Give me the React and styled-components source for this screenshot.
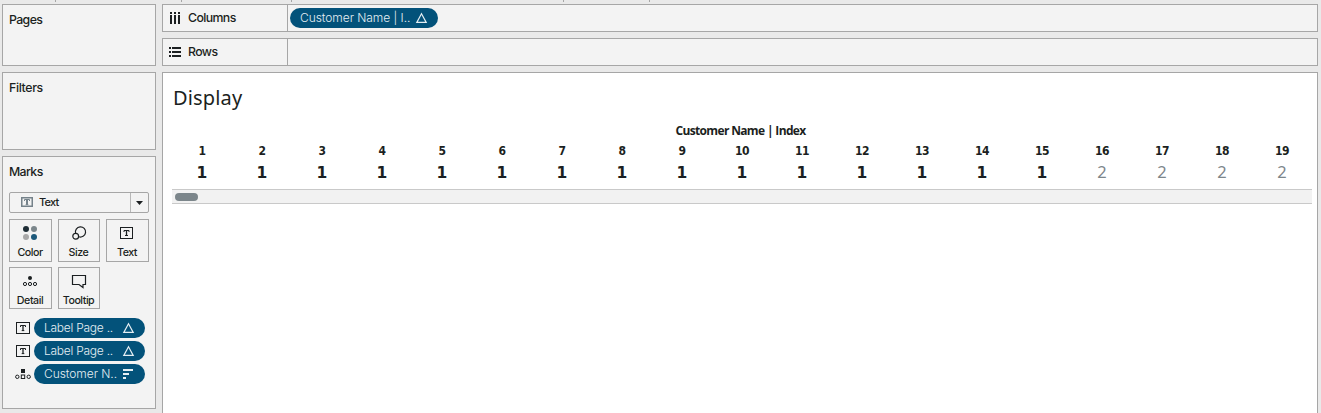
import React from 'react';
import styled, { createGlobalStyle } from 'styled-components';

const Global = createGlobalStyle`
  *, *::before, *::after { box-sizing: border-box; }
  body { margin: 0; background: #e9e9e9; color: #1b1f21; overflow: hidden; font-family: Inter, "Liberation Sans", sans-serif; }
  svg { display: block; flex: none; }
`;

const ui = 'Inter, "Liberation Sans", sans-serif';
const viz = '"Open Sans", "Noto Sans", sans-serif';

const Workspace = styled.div`
  height: 413px;
  overflow: hidden;
  display: flex;
  flex-direction: column;
`;
const TopStrip = styled.div`
  height: 4px;
  flex: none;
  display: flex;
`;
const TopCell = styled.div`
  width: ${(p) => p.$w}px;
  height: 2px;
  border-right: 1px solid #a6a6a6;
`;
const Body = styled.div`
  display: flex;
  gap: 6px;
  padding: 0 3px 0 2px;
  align-items: flex-start;
`;
const Side = styled.aside`
  width: 154px;
  flex: none;
  display: flex;
  flex-direction: column;
  gap: 6px;
`;
const Card = styled.section`
  height: ${(p) => p.$h}px;
  border: 1px solid #a6a6a6;
  background: #f3f3f3;
  padding: 7px 6px 0;
`;
const Label = styled.div`
  font: 500 12.3px/16px ${ui};
  letter-spacing: ${(p) => p.$ls || -0.6}px;
  white-space: nowrap;
`;
const MarkSelect = styled.div`
  height: 21px;
  margin-top: 12px;
  border: 1px solid #a6a6a6;
  border-radius: 2px;
  display: flex;
  align-items: stretch;
`;
const SelectValue = styled.div`
  width: 120px;
  flex: none;
  padding-left: 11px;
  padding-bottom: 1px;
  display: flex;
  align-items: center;
  gap: 6px;
  font: 500 11px/16px ${ui};
  letter-spacing: -0.8px;
`;
const SelectArrow = styled.div`
  flex: 1;
  border-left: 1px solid #b8b8b8;
  display: flex;
  align-items: center;
  justify-content: center;
`;
const MarkGrid = styled.div`
  margin-top: 6px;
  display: grid;
  grid-template-columns: 43px 42px 43px;
  grid-template-rows: 43px 42px;
  column-gap: 6px;
  row-gap: 5px;
`;
const MarkButton = styled.div`
  border: 1px solid #a6a6a6;
  display: flex;
  flex-direction: column;
  align-items: center;
  padding: 4px 1px 0 0;
  font: 500 10.7px/16px ${ui};
  letter-spacing: -0.48px;
  white-space: nowrap;
  svg { margin-bottom: 3px; }
`;
const PillList = styled.div`
  margin-top: 9px;
  display: flex;
  flex-direction: column;
  gap: 3px;
`;
const PillRow = styled.div`
  display: flex;
  align-items: center;
  padding-left: 5px;
`;
const RowIcon = styled.div`
  width: 18px;
  margin-right: 2px;
  display: flex;
  justify-content: center;
`;
const Pill = styled.div`
  width: ${(p) => p.$w}px;
  height: 20px;
  border-radius: 10px;
  background: #03527a;
  color: #e4eef3;
  display: flex;
  align-items: center;
  justify-content: space-between;
  padding: 0 10px;
  font: 300 12px/20px ${ui};
  letter-spacing: ${(p) => p.$ls}px;
  white-space: nowrap;
`;
const Main = styled.main`
  flex: 1;
  display: flex;
  flex-direction: column;
  gap: 6px;
`;
const Shelf = styled.div`
  height: 28px;
  border: 1px solid #a6a6a6;
  background: #f3f3f3;
  display: flex;
`;
const ShelfHead = styled.div`
  width: 125px;
  border-right: 1px solid #a6a6a6;
  display: flex;
  align-items: center;
  padding-left: 6px;
  gap: 7px;
`;
const ShelfBody = styled.div`
  padding: 3px 2px;
`;
const View = styled.div`
  height: 420px;
  background: #fff;
  border: 1px solid #a6a6a6;
  padding: 10px 5px 0 9px;
`;
const Title = styled.div`
  font: 400 20px/30px "Noto Sans", sans-serif;
  letter-spacing: 0.15px;
  padding-left: 1px;
  height: 30px;
`;
const FieldHeader = styled.div`
  margin-top: 9px;
  font: 700 12px/18px ${viz};
  letter-spacing: -0.65px;
  text-align: center;
  height: 18px;
  padding-right: 3px;
`;
const Grid = styled.div`
  display: grid;
  grid-template-columns: repeat(19, 60px);
  text-align: center;
`;
const Head = styled.div`
  font: 700 12px/22px "DejaVu Sans Condensed", "DejaVu Sans", sans-serif;
  letter-spacing: -0.4px;
  height: 22px;
`;
const Value = styled.div`
  font: ${(p) => (p.$on ? '700 15.5px/22px "DejaVu Sans"' : '400 16.5px/20px "Noto Sans"')}, sans-serif;
  color: ${(p) => (p.$on ? '#1b1f21' : '#7c868b')};
  height: 22px;
`;
const Scroll = styled.div`
  margin-top: 5px;
  width: 1140px;
  height: 15px;
  border: solid #c9c9c9;
  border-width: 1px 0;
  background: #f2f2f2;
  padding: 3px;
`;
const Thumb = styled.div`
  width: 23px;
  height: 8px;
  border-radius: 4px;
  background: #7c868b;
`;

const TextIcon = ({ w = 14, h = 12, color = '#1b1f21', sw = 1 }) => (
  <svg width={w} height={h} viewBox={`0 0 ${w} ${h}`} fill="none" stroke={color} strokeWidth={sw}>
    <rect x={sw / 2} y={sw / 2} width={w - sw} height={h - sw} />
    <g transform={`translate(${w / 2} ${h / 2})`} strokeWidth="1">
      <path d="M-2.5 -1V-2.5H2.5V-1M-1.3 2.6H1.3" />
      <path d="M0 -2.5V2.5" strokeWidth={sw > 1 ? 2 : 1.3} />
    </g>
  </svg>
);
const ColorIcon = () => (
  <svg width="16" height="18" viewBox="0 0 16 18">
    <circle cx="4" cy="5" r="3" fill="#1e2d35" />
    <circle cx="12" cy="5" r="3" fill="#7b868b" />
    <circle cx="4" cy="13" r="3" fill="#a8a8a8" />
    <circle cx="12" cy="13" r="3" fill="#1c587a" />
  </svg>
);
const SizeIcon = () => (
  <svg width="16" height="18" viewBox="0 0 16 18" fill="none" stroke="#1b1f21" strokeWidth="1.2">
    <path d="M4.6 9.4A5.1 5.1 0 1 1 7.7 12.7" />
    <circle cx="4.7" cy="12.3" r="2.9" />
  </svg>
);
const TextButtonIcon = () => (
  <svg width="14" height="18" viewBox="0 0 14 18" fill="none" stroke="#1b1f21">
    <rect x="0.5" y="3.5" width="12" height="11" />
    <path d="M4 8V6.5H9V8M5 11.5H8" />
    <path d="M6.5 6.5V11.5" strokeWidth="1.3" />
  </svg>
);
const DetailIcon = () => (
  <svg width="16" height="18" viewBox="0 0 16 18" fill="none" stroke="#1b1f21">
    <circle cx="8" cy="6" r="2" fill="#1b1f21" stroke="none" />
    <circle cx="3" cy="12" r="1.6" />
    <circle cx="8" cy="12" r="1.6" />
    <circle cx="13" cy="12" r="1.6" />
  </svg>
);
const TooltipIcon = () => (
  <svg width="16" height="18" viewBox="0 0 16 18" fill="none" stroke="#1b1f21" strokeWidth="1.2">
    <path d="M1.5 3.5H14.5V12.5H12V15.5L8 12.5H1.5Z" />
  </svg>
);
const DetailRowIcon = () => (
  <svg width="16" height="12" viewBox="0 0 16 12" fill="none" stroke="#1b1f21">
    <rect x="6" y="1" width="4" height="4" fill="#1b1f21" stroke="none" />
    <circle cx="2.3" cy="8.8" r="1.7" />
    <rect x="6.3" y="7" width="3.4" height="3.5" />
    <circle cx="13.7" cy="8.8" r="1.7" />
  </svg>
);
const Delta = () => (
  <svg width="13" height="12" viewBox="0 0 13 12" fill="none" stroke="#e4eef3" strokeWidth="1.2">
    <path d="M6.5 1.8L11.2 10.4H1.8Z" />
  </svg>
);
const SortIcon = () => (
  <svg width="13" height="12" viewBox="0 0 13 12" fill="#e4eef3">
    <path d="M1 1H11V3H1ZM1 5H7V7H1ZM1 9H4V11H1Z" />
  </svg>
);
const ColumnsIcon = () => (
  <svg width="12" height="12" viewBox="0 0 12 12" fill="#1b1f21">
    <path d="M1 0H3V2H1ZM1 3H3V12H1ZM5 0H7V2H5ZM5 3H7V12H5ZM9 0H11V2H9ZM9 3H11V12H9Z" />
  </svg>
);
const RowsIcon = () => (
  <svg width="12" height="12" viewBox="0 0 12 12" fill="#1b1f21">
    <path d="M0 1H2V3H0ZM3 1H12V3H3ZM0 5H2V7H0ZM3 5H12V7H3ZM0 9H2V11H0ZM3 9H12V11H3Z" />
  </svg>
);

const buttons = [
  ['Color', ColorIcon],
  ['Size', SizeIcon],
  ['Text', TextButtonIcon],
  ['Detail', DetailIcon],
  ['Tooltip', TooltipIcon],
];
const marks = [
  ['Label Page ..', TextIcon, Delta, -0.25],
  ['Label Page ..', TextIcon, Delta, -0.25],
  ['Customer N..', DetailRowIcon, SortIcon, -0.05],
];
const columns = Array.from({ length: 19 }, (_, i) => i + 1);

export default function App() {
  return (
    <Workspace>
      <Global />
      <TopStrip>
        {[56, 126, 110, 272, 86].map((w) => <TopCell key={w} $w={w} />)}
      </TopStrip>
      <Body>
        <Side>
          <Card $h={62}><Label>Pages</Label></Card>
          <Card $h={78}><Label $ls={-0.35}>Filters</Label></Card>
          <Card $h={253}>
            <Label>Marks</Label>
            <MarkSelect>
              <SelectValue><TextIcon w={12} h={10} color="#75828a" sw={1.5} />Text</SelectValue>
              <SelectArrow>
                <svg width="7" height="4" viewBox="0 0 7 4"><path d="M0 0H7L3.5 4Z" fill="#1b1f21" /></svg>
              </SelectArrow>
            </MarkSelect>
            <MarkGrid>
              {buttons.map(([name, Icon]) => <MarkButton key={name}><Icon />{name}</MarkButton>)}
            </MarkGrid>
            <PillList>
              {marks.map(([name, Icon, Tail, ls], i) => (
                <PillRow key={i}>
                  <RowIcon><Icon /></RowIcon>
                  <Pill $w={111} $ls={ls}>{name}<Tail /></Pill>
                </PillRow>
              ))}
            </PillList>
          </Card>
        </Side>
        <Main>
          <Shelf>
            <ShelfHead><ColumnsIcon /><Label>Columns</Label></ShelfHead>
            <ShelfBody><Pill $w={148} $ls={-0.05}>Customer Name | I..<Delta /></Pill></ShelfBody>
          </Shelf>
          <Shelf>
            <ShelfHead><RowsIcon /><Label>Rows</Label></ShelfHead>
          </Shelf>
          <View>
            <Title>Display</Title>
            <FieldHeader>Customer Name | Index</FieldHeader>
            <Grid>
              {columns.map((n) => <Head key={n}>{n}</Head>)}
              {columns.map((n) => <Value key={n} $on={n <= 15}>{n <= 15 ? 1 : 2}</Value>)}
            </Grid>
            <Scroll><Thumb /></Scroll>
          </View>
        </Main>
      </Body>
    </Workspace>
  );
}
